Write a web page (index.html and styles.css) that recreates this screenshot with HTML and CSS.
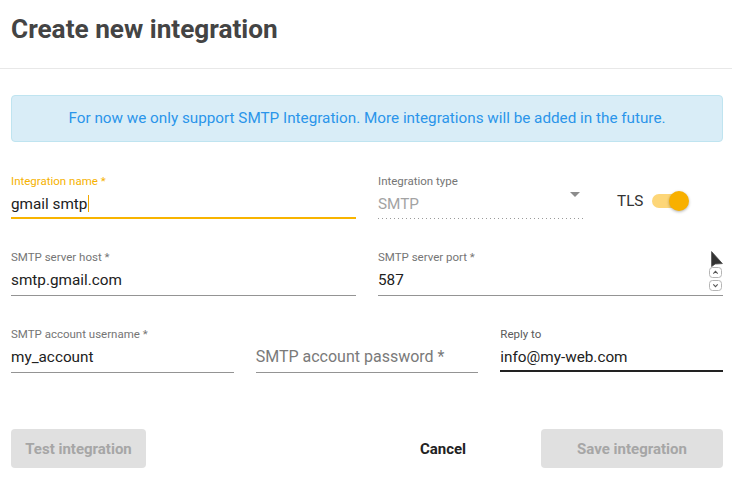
FILE: index.html
```html
<!DOCTYPE html>
<html lang="en">
<head>
<meta charset="utf-8">
<title>Create new integration</title>
<link rel="stylesheet" href="styles.css">
</head>
<body>
<div class="page">
  <header class="head">
    <h1>Create new integration</h1>
  </header>
  <main class="content">
    <div class="alert">For now we only support SMTP Integration. More integrations will be added in the future.</div>
    <form class="form">
      <div class="row row-2">
        <div class="field focused">
          <label>Integration name *</label>
          <div class="value">gmail smtp<span class="caret"></span></div>
        </div>
        <div class="type-wrap">
          <div class="field select">
            <label>Integration type</label>
            <div class="value">
              <span>SMTP</span>
              <svg class="arrow" width="10" height="5" viewBox="0 0 10 5"><path d="M0 0H10L5 5Z" fill="#8c8c8c"/></svg>
            </div>
          </div>
          <div class="tls">
            <span>TLS</span>
            <span class="switch"><span class="knob"></span></span>
          </div>
        </div>
      </div>
      <div class="row row-2">
        <div class="field">
          <label>SMTP server host *</label>
          <div class="value">smtp.gmail.com</div>
        </div>
        <div class="field port">
          <label>SMTP server port *</label>
          <div class="value">
            <span class="grow">587</span>
            <svg class="spinner" width="13" height="24" viewBox="0 0 13 24">
              <rect x="0.5" y="0.5" width="12" height="10" rx="3" fill="#fff" stroke="#b5b5b5"/>
              <rect x="0.5" y="13.5" width="12" height="10" rx="3" fill="#fff" stroke="#b5b5b5"/>
              <path d="M4.3 6.6 L6.5 4.4 L8.7 6.6" fill="none" stroke="#555" stroke-width="1.1"/>
              <path d="M4.3 17.4 L6.5 19.6 L8.7 17.4" fill="none" stroke="#555" stroke-width="1.1"/>
            </svg>
          </div>
          <svg class="pointer" width="12" height="17" viewBox="0 0 12 17">
            <path d="M0.6 0.6 L0.6 15.6 L4.2 13 L11.4 12.6 Z" fill="#333" stroke="#4a4a4a" stroke-width="0.8" stroke-linejoin="round"/>
          </svg>
        </div>
      </div>
      <div class="row row-3">
        <div class="field">
          <label>SMTP account username *</label>
          <div class="value">my_account</div>
        </div>
        <div class="field placeholder">
          <label>&nbsp;</label>
          <div class="value">SMTP account password *</div>
        </div>
        <div class="field active">
          <label>Reply to</label>
          <div class="value">info@my-web.com</div>
        </div>
      </div>
    </form>
    <div class="actions">
      <button class="btn btn-disabled btn-test" type="button">Test integration</button>
      <div class="actions-right">
        <button class="btn btn-cancel" type="button">Cancel</button>
        <button class="btn btn-disabled btn-save" type="button">Save integration</button>
      </div>
    </div>
  </main>
</div>
</body>
</html>
```

FILE: styles.css
```css
html, body {
  margin: 0;
  padding: 0;
  background: #ffffff;
}

.page {
  font-family: Roboto, "Liberation Sans", Arial, sans-serif;
  color: #212121;
  width: 732px;
  min-height: 495px;
}

.head {
  padding: 14px 11px 24px;
  border-bottom: 1px solid #e8e8e8;
}

.head h1 {
  margin: 0;
  font-size: 26.2px;
  line-height: 30px;
  font-weight: 700;
  color: #444444;
}

.content {
  padding: 26px 9px 0 11px;
}

.alert {
  background: #d9edf7;
  border: 1px solid #bfe4f0;
  border-radius: 4px;
  padding: 12px;
  font-size: 15.25px;
  line-height: 21px;
  color: #2b95ea;
  text-align: center;
}

.form {
  margin-top: 32px;
  display: flex;
  flex-direction: column;
  gap: 31px;
}

.row-2 {
  display: grid;
  grid-template-columns: 1fr 1fr;
  column-gap: 22px;
  align-items: start;
}

.row-3 {
  display: grid;
  grid-template-columns: 1fr 1fr 1fr;
  column-gap: 22px;
  align-items: start;
}

.field label {
  display: block;
  font-size: 11.5px;
  line-height: 14px;
  color: #757575;
  margin-bottom: 6px;
}

.field .value {
  font-size: 15.3px;
  line-height: 20px;
  height: 20px;
  padding-bottom: 5px;
  border-bottom: 1px solid #949494;
  color: #212121;
  white-space: nowrap;
}

.focused label {
  color: #f6b200;
}

.focused .value {
  padding-bottom: 3px;
  border-bottom: 2px solid #f8b400;
}

.caret {
  display: inline-block;
  width: 0;
  height: 17px;
  border-left: 1px solid #f3a800;
  vertical-align: -3px;
  margin-left: 1px;
}

.type-wrap {
  display: flex;
  align-items: flex-start;
}

.select {
  width: 206px;
  flex: none;
}

.select .value {
  display: flex;
  justify-content: space-between;
  color: #a3a3a3;
  border-bottom: none;
  padding-bottom: 5px;
  background: linear-gradient(to right, #9a9a9a 1px, transparent 1px) left bottom / 4px 1px repeat-x;
}

.select .arrow {
  margin-top: -2px;
  margin-right: 4px;
}

.tls {
  margin-left: 33px;
  margin-top: 17px;
  display: flex;
  align-items: center;
  gap: 9px;
  font-size: 15.3px;
  line-height: 20px;
  color: #333333;
}

.switch {
  position: relative;
  display: block;
  width: 34px;
  height: 14px;
  border-radius: 7px;
  background: #fdd678;
}

.knob {
  position: absolute;
  top: -3px;
  left: 17px;
  width: 20px;
  height: 20px;
  border-radius: 50%;
  background: #f8b000;
  box-shadow: 0 1px 3px rgba(0, 0, 0, 0.3);
}

.port {
  position: relative;
}

.port .value {
  display: flex;
  align-items: center;
}

.grow {
  flex: 1;
}

.spinner {
  margin-right: 1px;
  margin-top: -2px;
}

.pointer {
  position: absolute;
  top: 1px;
  right: 0;
}

.placeholder .value {
  font-size: 16px;
  color: #7a7a7a;
}

.active label {
  color: #5a5a5a;
}

.active .value {
  padding-bottom: 3px;
  border-bottom: 2px solid #222222;
}

.actions {
  margin-top: 56px;
  display: flex;
  justify-content: space-between;
  align-items: center;
}

.actions-right {
  display: flex;
  gap: 39px;
}

.btn {
  height: 39px;
  border: none;
  border-radius: 4px;
  font-family: Roboto, "Liberation Sans", Arial, sans-serif;
  font-size: 15px;
  font-weight: 700;
  padding: 0;
  cursor: default;
}

.btn-disabled {
  background: #e0e0e0;
  color: #a6a6a6;
}

.btn-test {
  width: 135px;
}

.btn-cancel {
  width: 118px;
  background: #ffffff;
  color: #222222;
}

.btn-save {
  width: 182px;
}
```
